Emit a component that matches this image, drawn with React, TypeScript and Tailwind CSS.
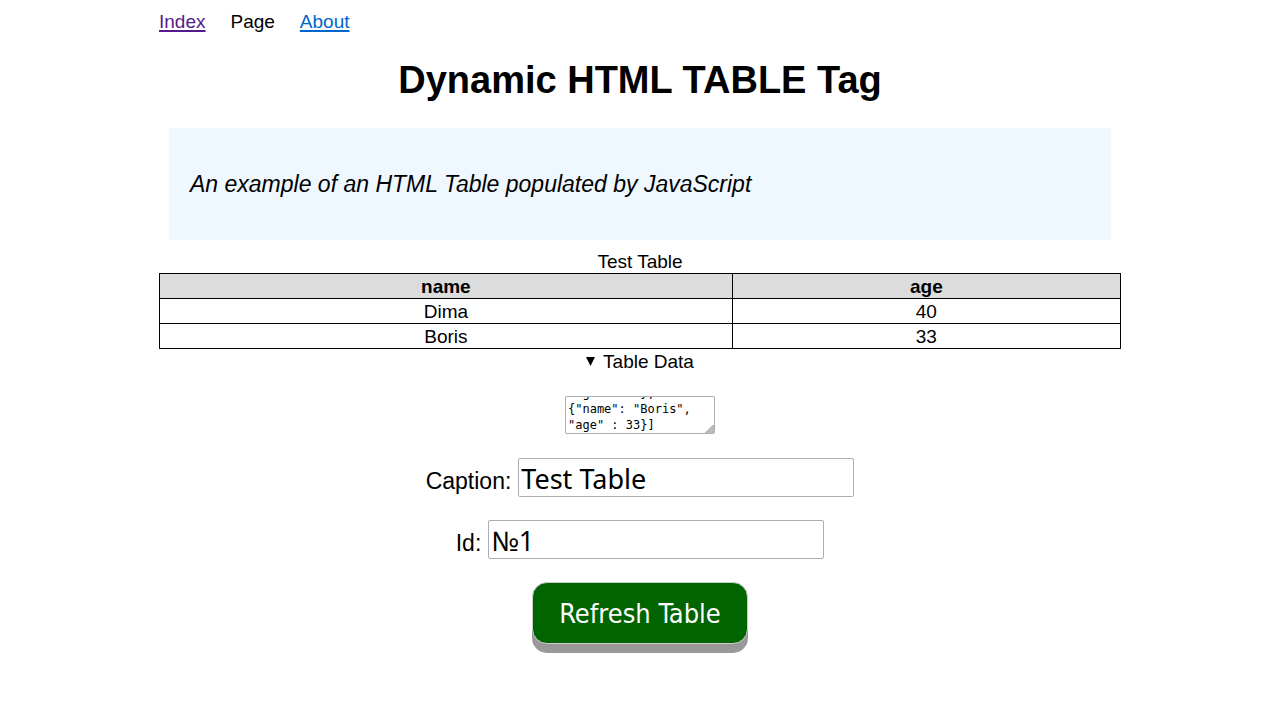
import { useLayoutEffect, useRef, useState } from "react";

type Person = { name: string; age: number };

const initialJson = `[{"name": "Dima",
"age" : 40},
{"name": "Boris",
"age" : 33}]`;

const fieldClass =
  "h-[39px] w-[336px] rounded-xs border border-[#adadb8] bg-white px-[2px] pt-[2px] font-['Noto_Sans',sans-serif] text-[27px] leading-[34px] text-black";

const cellClass = "border border-black px-0 pt-[2px] pb-0 leading-[22px]";

export default function App() {
  const [json, setJson] = useState(initialJson);
  const [caption, setCaption] = useState("Test Table");
  const [id, setId] = useState("№1");
  const [table, setTable] = useState({
    caption: "Test Table",
    id: "№1",
    rows: JSON.parse(initialJson) as Person[],
  });
  const dataRef = useRef<HTMLTextAreaElement>(null);

  useLayoutEffect(() => {
    if (dataRef.current) dataRef.current.scrollTop = dataRef.current.scrollHeight;
  }, []);

  const refresh = () => {
    try {
      setTable({ caption, id, rows: JSON.parse(json) });
    } catch {
      dataRef.current?.focus();
    }
  };

  return (
    <div className="mx-auto w-3/4 pt-[9px] pb-8 font-['Liberation_Sans',Arial,sans-serif] text-[19px] leading-[25px] text-black">
      <nav className="-mx-px flex gap-[25px]">
        <a href="#index" className="text-[#551a8b] underline decoration-2 underline-offset-2">Index</a>
        <span>Page</span>
        <a href="#about" className="text-[#0066cc] underline decoration-2 underline-offset-2">About</a>
      </nav>

      <h1 className="mt-5 text-center text-[38px] leading-[52px] font-bold">Dynamic HTML TABLE Tag</h1>

      <blockquote className="mx-[9px] mt-[22px] bg-[#eff7ff] px-[21px] py-10 text-[23px] leading-[32px] italic">
        An example of an HTML Table populated by JavaScript
      </blockquote>

      <div className="-mx-px mt-[8px]">
        <table id={table.id} className="w-full border-collapse text-center">
          <caption className="pt-[2px] leading-[23px]">{table.caption}</caption>
          <thead>
            <tr className="bg-[#dcdcdc]">
              <th className={`w-[59.6%] ${cellClass}`}>name</th>
              <th className={cellClass}>age</th>
            </tr>
          </thead>
          <tbody>
            {table.rows.map((row) => (
              <tr key={row.name}>
                <td className={cellClass}>{row.name}</td>
                <td className={cellClass}>{row.age}</td>
              </tr>
            ))}
          </tbody>
        </table>
      </div>

      <details open className="group text-center">
        <summary className="flex list-none items-center justify-center gap-2">
          <svg viewBox="0 0 9 9" aria-hidden="true" className="size-[9px] -rotate-90 group-open:rotate-0">
            <path d="M0 0H9L4.5 9Z" fill="currentColor" />
          </svg>
          Table Data
        </summary>
        <textarea
          ref={dataRef}
          aria-label="Table Data"
          value={json}
          onChange={(e) => setJson(e.target.value)}
          className="mx-auto mt-[22px] block h-[38px] w-[150px] resize overflow-hidden rounded-xs border border-[#adadb8] bg-white px-[2px] pt-[2px] font-['DejaVu_Sans_Mono',monospace] text-[12px] leading-4 [&::-webkit-resizer]:bg-[linear-gradient(135deg,transparent_70%,#bbbbbb_70%)]"
        />
      </details>

      <div className="mt-6 flex flex-col items-center gap-[23px] text-[23px]">
        <div className="flex items-center gap-[7px]">
          <label htmlFor="caption" className="pt-2">Caption:</label>
          <input id="caption" value={caption} onChange={(e) => setCaption(e.target.value)} className={fieldClass} />
        </div>
        <div className="flex items-center gap-[7px]">
          <label htmlFor="table-id" className="pt-2">Id:</label>
          <input id="table-id" value={id} onChange={(e) => setId(e.target.value)} className={fieldClass} />
        </div>
        <button
          type="button"
          onClick={refresh}
          className="h-[62px] w-[216px] rounded-[15px] border border-[#cccccc] bg-[#006400] pt-[2px] font-['DejaVu_Sans_Condensed','DejaVu_Sans',sans-serif] text-[27px] leading-[34px] text-white shadow-[0_9px_#999999]"
        >
          Refresh Table
        </button>
      </div>
    </div>
  );
}
